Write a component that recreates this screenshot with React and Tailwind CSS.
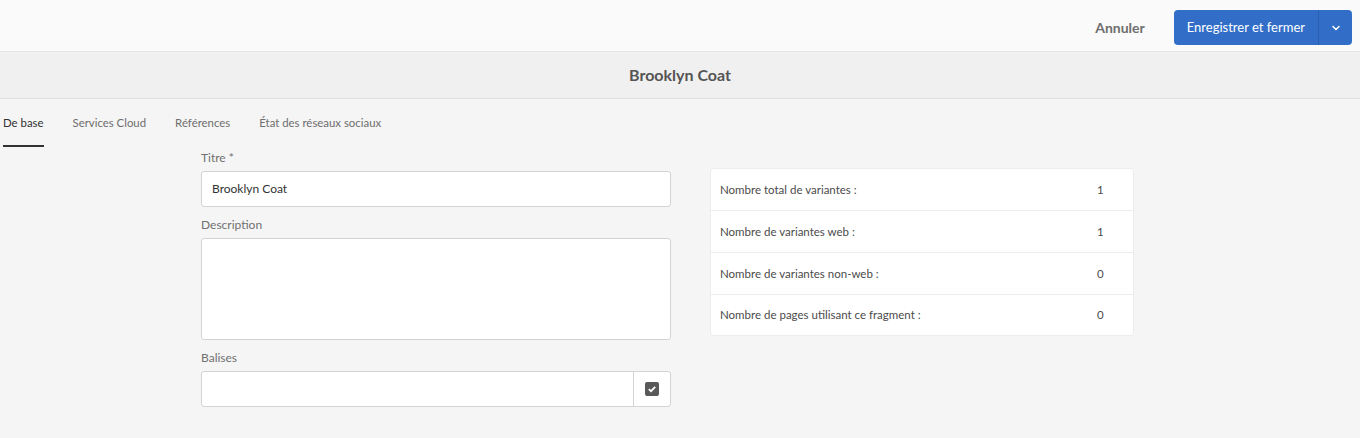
import { ChevronDown } from "lucide-react";

const stats = [
  { label: "Nombre total de variantes :", value: "1" },
  { label: "Nombre de variantes web :", value: "1" },
  { label: "Nombre de variantes non-web :", value: "0" },
  { label: "Nombre de pages utilisant ce fragment :", value: "0" },
];

const tabs = ["De base", "Services Cloud", "Références", "État des réseaux sociaux"];

export default function App() {
  return (
    <div className="h-[438px] bg-[#f5f5f5] font-['Lato',sans-serif] text-[#4b4b4b]">
      <div className="flex h-[52px] items-start justify-end border-b border-[#e6e6e6] bg-[#fafafa] pr-[8px] pt-[10px]">
        <button className="mr-[29px] flex h-[35px] items-center text-[14px] font-bold text-[#6e6e6e]">Annuler</button>
        <div className="flex h-[35px] items-stretch overflow-hidden rounded-[4px] bg-[#326ec8] text-white">
          <span className="flex items-center px-[13px] text-[13px]">Enregistrer et fermer</span>
          <span className="flex w-[34px] items-center justify-center border-l border-[#2a5fb0]">
            <ChevronDown size={12} strokeWidth={3} />
          </span>
        </div>
      </div>

      <div className="flex h-[47px] items-center justify-center border-b border-[#e1e1e1] bg-[#f0f0f0]">
        <h1 className="text-[16px] font-bold text-[#555]">Brooklyn Coat</h1>
      </div>

      <div className="flex h-[48px] items-stretch pl-[3px]">
        {tabs.map((t, i) => (
          <div
            key={t}
            className={
              "mr-[29px] flex items-center border-b-2 pt-[1px] text-[11.4px] " +
              (i === 0 ? "border-[#323232] text-[#323232]" : "border-transparent text-[#6e6e6e]")
            }
          >
            {t}
          </div>
        ))}
      </div>

      <div className="flex items-start pl-[201px]">
        <div className="w-[470px] pt-[2px]">
          <label className="block text-[12px] text-[#707070]">Titre *</label>
          <div className="mt-[4px] flex h-[36px] items-center rounded-[3px] border border-[#d3d3d3] bg-white px-[10px] text-[12px] text-[#323232]">
            Brooklyn Coat
          </div>
          <label className="mt-[9px] block text-[12px] text-[#707070]">Description</label>
          <div className="mt-[4px] h-[102px] rounded-[3px] border border-[#d3d3d3] bg-white" />
          <label className="mt-[9px] block text-[12px] text-[#707070]">Balises</label>
          <div className="mt-[4px] flex h-[36px] rounded-[3px] border border-[#d3d3d3] bg-white">
            <div className="flex-1" />
            <div className="flex w-[37px] items-center justify-center border-l border-[#d3d3d3]">
              <span className="flex h-[14px] w-[14px] items-center justify-center rounded-[2px] bg-[#595959]">
                <svg width="10" height="10" viewBox="0 0 10 10">
                  <path d="M1.8 5.2 L4 7.2 L8.2 2.8" fill="none" stroke="white" strokeWidth="1.8" />
                </svg>
              </span>
            </div>
          </div>
        </div>

        <div className="ml-[39px] mt-[21px] w-[424px] overflow-hidden rounded-[3px] border border-[#ececec] bg-white">
          {stats.map((s, i) => (
            <div
              key={s.label}
              className={
                "flex items-center pl-[9px] text-[11.5px] text-[#4b4b4b] " +
                (i === 0 ? "h-[41px]" : i === 3 ? "h-[41px] border-t border-[#ececec]" : "h-[42px] border-t border-[#ececec]")
              }
            >
              <span className="flex-1">{s.label}</span>
              <span className="w-[36px]">{s.value}</span>
            </div>
          ))}
        </div>
      </div>
    </div>
  );
}
